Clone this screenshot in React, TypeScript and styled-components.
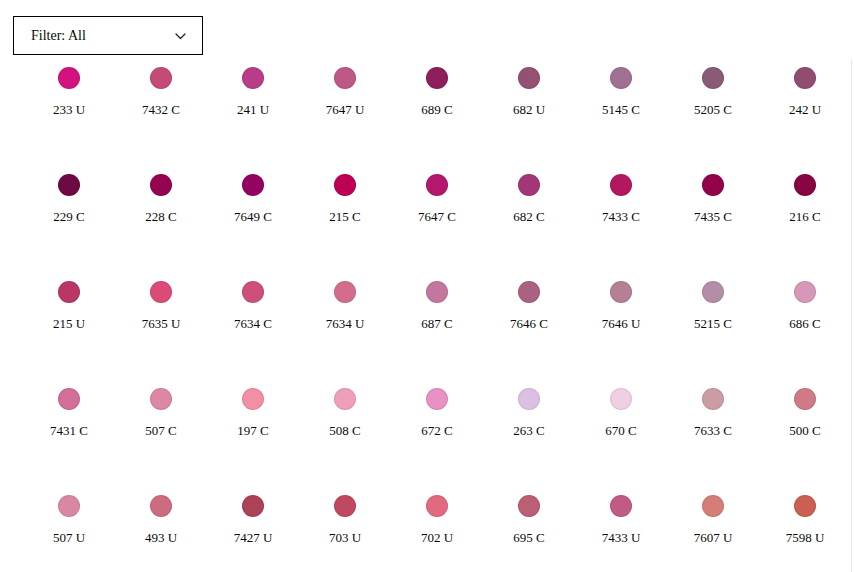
import styled, { createGlobalStyle } from 'styled-components';

const GlobalStyle = createGlobalStyle`
	html, body {
		margin: 0;
		padding: 0;
		background: #ffffff;
	}
	body {
		font-family: 'Liberation Serif', 'Times New Roman', serif;
		color: #111111;
	}
`;

type Swatch = { name: string; color: string };

const swatches: Swatch[] = [
	{ name: '233 U', color: '#d4127f' },
	{ name: '7432 C', color: '#c44a78' },
	{ name: '241 U', color: '#b83c88' },
	{ name: '7647 U', color: '#bd5887' },
	{ name: '689 C', color: '#8e1f5c' },
	{ name: '682 U', color: '#955172' },
	{ name: '5145 C', color: '#a07093' },
	{ name: '5205 C', color: '#8a5b77' },
	{ name: '242 U', color: '#904d6f' },

	{ name: '229 C', color: '#6d0a44' },
	{ name: '228 C', color: '#940451' },
	{ name: '7649 C', color: '#94035f' },
	{ name: '215 C', color: '#bd0054' },
	{ name: '7647 C', color: '#b3186e' },
	{ name: '682 C', color: '#a33676' },
	{ name: '7433 C', color: '#b3185f' },
	{ name: '7435 C', color: '#92034a' },
	{ name: '216 C', color: '#860442' },

	{ name: '215 U', color: '#b93767' },
	{ name: '7635 U', color: '#db4b75' },
	{ name: '7634 C', color: '#cd5079' },
	{ name: '7634 U', color: '#d26e8c' },
	{ name: '687 C', color: '#c3779f' },
	{ name: '7646 C', color: '#ab6282' },
	{ name: '7646 U', color: '#b57f95' },
	{ name: '5215 C', color: '#b48ea6' },
	{ name: '686 C', color: '#d797b8' },

	{ name: '7431 C', color: '#d26e98' },
	{ name: '507 C', color: '#de87a3' },
	{ name: '197 C', color: '#f28ea5' },
	{ name: '508 C', color: '#eea0b8' },
	{ name: '672 C', color: '#e891c3' },
	{ name: '263 C', color: '#dcc0e3' },
	{ name: '670 C', color: '#efcfe2' },
	{ name: '7633 C', color: '#c99da3' },
	{ name: '500 C', color: '#cf7a86' },

	{ name: '507 U', color: '#d888a3' },
	{ name: '493 U', color: '#cd6c80' },
	{ name: '7427 U', color: '#ab4256' },
	{ name: '703 U', color: '#bf4a60' },
	{ name: '702 U', color: '#e26a80' },
	{ name: '695 C', color: '#bc5e74' },
	{ name: '7433 U', color: '#c05b86' },
	{ name: '7607 U', color: '#d57e78' },
	{ name: '7598 U', color: '#cb5f51' },
];

const Page = styled.div`
	padding: 16px 0 0 13px;
`;

const FilterButton = styled.button`
	display: flex;
	align-items: center;
	justify-content: space-between;
	box-sizing: border-box;
	width: 190px;
	height: 39px;
	padding: 1px 16px 0 17px;
	border: 1px solid #000000;
	background: #ffffff;
	font-family: 'Liberation Serif', 'Times New Roman', serif;
	font-size: 14px;
	color: #0a0a0a;
	cursor: pointer;
`;

const Grid = styled.div`
	display: grid;
	grid-template-columns: repeat(9, 92px);
	width: 828px;
	margin: 5px 0 0 10px;
	border-right: 1px solid #e6e6e6;
`;

const Cell = styled.div`
	display: flex;
	flex-direction: column;
	align-items: center;
	height: 107px;
	padding-top: 7px;
	box-sizing: border-box;
`;

const Dot = styled.div<{ $color: string }>`
	width: 22px;
	height: 22px;
	border-radius: 50%;
	background: ${(p) => p.$color};
	box-shadow: inset 0 0 0 1px rgba(0, 0, 0, 0.08);
`;

const Label = styled.div`
	margin-top: 13px;
	font-size: 13px;
	line-height: 16px;
	color: #0a0a0a;
`;

const Chevron = () => (
	<svg width="11" height="7" viewBox="0 0 11 7" fill="none">
		<polyline
			points="1,1 5.5,5.5 10,1"
			stroke="#222"
			strokeWidth="1.3"
			strokeLinecap="round"
			strokeLinejoin="round"
		/>
	</svg>
);

const App = () => {
	return (
		<Page>
			<GlobalStyle />
			<FilterButton>
				<span>Filter: All</span>
				<Chevron />
			</FilterButton>
			<Grid>
				{swatches.map((s, i) => (
					<Cell key={i}>
						<Dot $color={s.color} />
						<Label>{s.name}</Label>
					</Cell>
				))}
			</Grid>
		</Page>
	);
};

export default App;
